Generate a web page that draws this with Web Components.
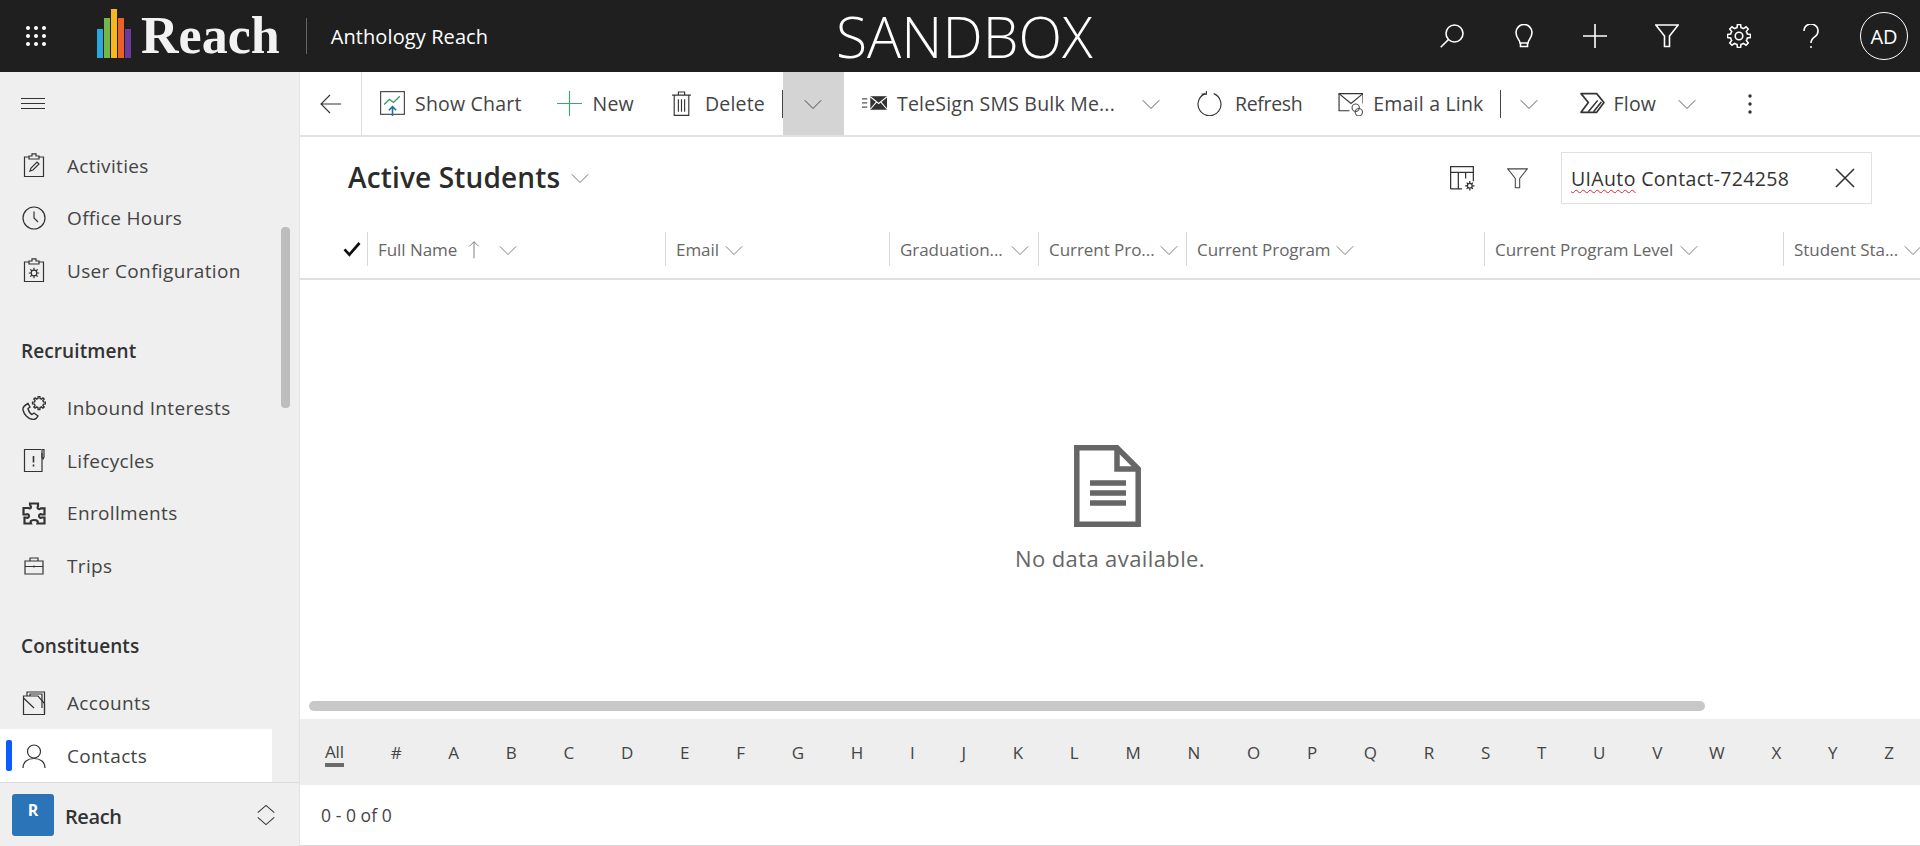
<!doctype html>
<html>
<head>
<meta charset="utf-8">
<style>
	html, body {
		margin: 0;
		padding: 0;
		height: 100%;
		overflow: hidden;
		font-family: "Open Sans", "Noto Sans", sans-serif;
		color: #333;
	}
	app-shell { height: 846px; }
</style>
</head>
<body>

<app-shell>
	<top-bar slot="top"></top-bar>
	<side-nav slot="side">
		<nav-item icon="activities">Activities</nav-item>
		<nav-item icon="clock">Office Hours</nav-item>
		<nav-item icon="userconfig">User Configuration</nav-item>
		<nav-group>Recruitment</nav-group>
		<nav-item icon="inbound">Inbound Interests</nav-item>
		<nav-item icon="lifecycle">Lifecycles</nav-item>
		<nav-item icon="puzzle">Enrollments</nav-item>
		<nav-item icon="trips">Trips</nav-item>
		<nav-group>Constituents</nav-group>
		<nav-item icon="accounts">Accounts</nav-item>
		<nav-item icon="person" active>Contacts</nav-item>
	</side-nav>
	<command-bar slot="main"></command-bar>
	<view-header slot="main"></view-header>
	<grid-header slot="main"></grid-header>
	<empty-state slot="main">No data available.</empty-state>
	<h-scroll slot="main"></h-scroll>
	<jump-bar slot="main"></jump-bar>
	<page-footer slot="main">0 - 0 of 0</page-footer>
</app-shell>

<script>
// toothed outline, used by the settings and inbound icons
function gearPath(cx, cy, outer, inner, teeth) {
	let d = ''
	const step = Math.PI * 2 / teeth
	for(let i = 0; i < teeth; i++) {
		const a = i * step
		const pts = [
			[inner, a - step * .5], [inner, a - step * .3],
			[outer, a - step * .17], [outer, a + step * .17],
			[inner, a + step * .3]
		]
		pts.forEach(([r, t], n) => {
			d += (i === 0 && n === 0 ? 'M' : 'L') + (cx + r * Math.cos(t)).toFixed(2) + ' ' + (cy + r * Math.sin(t)).toFixed(2)
		})
	}
	return d + 'z'
}

const ICONS = {
	waffle: '<g fill="currentColor" stroke="none"><circle cx="4" cy="4" r="2"/><circle cx="12" cy="4" r="2"/><circle cx="20" cy="4" r="2"/><circle cx="4" cy="12" r="2"/><circle cx="12" cy="12" r="2"/><circle cx="20" cy="12" r="2"/><circle cx="4" cy="20" r="2"/><circle cx="12" cy="20" r="2"/><circle cx="20" cy="20" r="2"/></g>',
	search: '<circle cx="14.5" cy="9.5" r="8.5"/><path d="M8.5 15.5L.7 23.3"/>',
	bulb: '<path d="M8 19c0-3-4-5-4-10.5a8 8 0 0 1 16 0C20 14 16 16 16 19z"/><path d="M8.5 19v3.500h7V19"/>',
	plus: '<path d="M0 12h24M12 0v24"/>',
	filter: '<path d="M.8 1h22.4l-8.7 11v10.500h-5V12z"/>',
	gear: `<circle cx="12" cy="12" r="3.8"/><path d="${gearPath(12, 12, 11.6, 8.6, 8)}"/>`,
	help: '<path d="M5 7a7 7 0 1 1 11 5.700c-2.500 1.800-4 2.900-4 6.300"/><circle cx="12" cy="23" r="1" fill="currentColor" stroke="none"/>',
	back: '<path d="M22 12H2M11 3l-9 9 9 9"/>',
	chart: '<rect x=".6" y=".6" width="22.8" height="21.8" fill="none" stroke="#444"/><path d="M4 13l5-5 4 3 6-6" stroke="#2c9f62" stroke-width="1.3"/><path d="M12 24.500V15M8.500 18.500L12 15l3.500 3.500" stroke="#1e6fa8" stroke-width="1.5"/>',
	new: '<path d="M0 12h24M12 0v24" stroke="#3aa76d"/>',
	trash: '<path d="M0 4h18M6 4V1h6v3M2 4v19.400h14V4M6 8v12M9 8v12M12 8v12" transform="translate(3 0)"/>',
	sms: '<rect x="8" y="5" width="16" height="13" fill="#333" stroke="none"/><path d="M8 5.500l8 6.500 8-6.500M8 17.500l6-7M24 17.500l-6-7" stroke="#fff" stroke-width="1"/><path d="M0 7.500h5M0 11.500h5M0 15.500h5" stroke="#555" stroke-width="1.2"/>',
	refresh: '<path d="M16 2.500a11 11 0 1 1-8 0"/><path d="M9 0v3H4.500"/>',
	mail: '<path d="M11 19H1V2.500h23V12"/><path d="M1 2.500l11.500 9.500L24 2.500"/><circle cx="17" cy="16" r="3.500" stroke="#555" stroke-width="1.1"/><circle cx="20" cy="20.300" r="3.500" stroke="#555" stroke-width="1.1"/>',
	flow: '<path d="M1 2.500h15l7 8.500-7 9.500H1l7-9.500z" stroke-width="1.6" stroke-linejoin="round"/><path d="M8 20L17 9M13 20l7.500-9.500" stroke-width="1.5"/>',
	more: '<g fill="currentColor" stroke="none"><circle cx="12" cy="4" r="1.7"/><circle cx="12" cy="12" r="1.7"/><circle cx="12" cy="20" r="1.7"/></g>',
	chev: '<path d="M1 7l11 11L23 7"/>',
	updown: '<path d="M3 9.500l9-8 9 8M3 14.500l9 8 9-8"/>',
	columns: '<path d="M.6 22V.6h21.8v14M.6 6h21.8M8 6v16M15 6v6M.6 22h11"/><circle cx="19" cy="19" r="2.3"/><path d="M19 14.500v2M19 21.500v2M14.500 19h2M21.500 19h2M16 16l1.300 1.300M20.700 20.700L22 22M16 22l1.300-1.300M20.700 17.300L22 16"/>',
	close: '<path d="M3 3l18 18M21 3L3 21" stroke-width="1.6"/>',
	check: '<path d="M2 12.500l6.500 7L22 4" stroke-width="3.6" stroke="#111"/>',
	up: '<path d="M12 23V1M6 7l6-6 6 6"/>',
	activities: '<path d="M7 4H2.500v19.500h19V4H17"/><path d="M7 6V3h3V.8h4V3h3v3z"/><path d="M8 18l1-3 6-6 2 2-6 6z"/>',
	clock: '<circle cx="12" cy="12" r="11"/><path d="M12 5.500V12l4 4"/>',
	userconfig: '<path d="M7 4H2.500v19.500h19V4H17"/><path d="M7 6V3h3V.8h4V3h3v3z"/><circle cx="12" cy="15" r="2.8"/><path d="M12 9.800v2.400M12 17.800v2.400M6.800 15h2.400M14.800 15h2.400M8.300 11.300L10 13M14 17l1.700 1.700M8.300 18.700L10 17M14 13l1.700-1.700"/>',
	inbound: `<path d="M6 7.500C3 9 .5 11.500 1 14c1 4.500 5 9 10 9.500 2 .2 4-1.500 5-3.500l-4-3-2 1.500C8 17.500 6.500 15 6 12.500L8 11z" stroke-width="1.4"/><path d="${gearPath(17, 7, 6.5, 4.6, 8)}" stroke-width="1.4"/>`,
	lifecycle: '<path d="M20 5V23.500H2.500V1.500H19"/><path d="M11.500 8v6.500M11.500 16.500v2" stroke-width="1.6"/><path d="M20 1.500h2V9l-1 2-1-2z" stroke-width="1.2"/>',
	puzzle: '<path d="M8 2.500h8v2.500c0 1-1 1.500 0 2.500 1 .8 2 .8 3-.2h3.500v6.200H20c-1-.8-3-.5-3 1.500s2 2.300 3 1.500h2.500v6h-7c.7-2 .2-3.500-3.500-3.500S8.200 20.500 9 22.500H2.500v-6H4c1 .8 3 .5 3-1.500s-2-2.300-3-1.500H1.500V7h5c1 .8 2.500.5 2.500-1 0-1-1-1.500-1-2.500z" stroke-width="2.2"/>',
	trips: '<path d="M3 8h18v13H3zM8 8V5h8v3M3 13.500h18M12 12.500v2"/>',
	accounts: '<path d="M1.500 7v16.500h21V12.500L16 5H1.500zM1.500 7L12 17"/><path d="M5 5V1h17.500v21M8 5V3h12v14"/>',
	person: '<circle cx="12" cy="7.500" r="6.500"/><path d="M1 24c0-6 4.500-9.500 11-9.500S23 18 23 24"/>'
}

function icon(name, size, sw) {
	return `<svg width="${size}" height="${size}" viewBox="0 0 24 24" fill="none" stroke="currentColor" stroke-width="${sw}">${ICONS[name]}</svg>`
}

function shadow(el, html) {
	const root = el.attachShadow({mode: 'open'})
	root.innerHTML = html
	return root
}

window.customElements.define('app-shell', class extends HTMLElement {
	constructor() {
		super()
		shadow(this, `<style>
			:host { display: grid; grid-template-columns: 300px 1fr; grid-template-rows: 72px 1fr; width: 1920px; }
			.top { grid-column: 1 / 3; display: block; }
			.side { display: block; min-height: 0; }
			.main { display: flex; flex-direction: column; min-width: 0; min-height: 0; background: #fff; }
		</style>
		<div class="top"><slot name="top"></slot></div>
		<div class="side"><slot name="side"></slot></div>
		<div class="main"><slot name="main"></slot></div>`)
	}
})

window.customElements.define('top-bar', class extends HTMLElement {
	constructor() {
		super()
		const btn = (name, w) => `<span class="btn" style="width:${w}px">${icon(name, 24, 1.6)}</span>`
		shadow(this, `<style>
			:host { display: flex; align-items: center; height: 72px; background: #1f1f1f; color: #fff; position: relative; }
			svg { display: block; }
			.waffle { margin-left: 24px; }
			.bars { display: flex; align-items: flex-end; gap: 1px; height: 49px; margin: 0 0 14px 49px; align-self: flex-end; }
			.bars i { display: block; width: 6px; }
			.word { font: bold 52px/72px "Liberation Serif", serif; color: #f2f2f2; margin-left: 10px; height: 72px; }
			.sep { width: 1px; height: 36px; background: #666; margin: 0 24px 0 26px; }
			.app { font-size: 20px; letter-spacing: .1px; color: #fff; }
			.env { position: absolute; left: 836px; top: 0; line-height: 72px; font-size: 57px; font-weight: 300; color: #fff; }
			.right { margin-left: auto; display: flex; align-items: center; padding-right: 12px; }
			.btn { display: flex; justify-content: center; }
			.avatar { width: 46px; height: 46px; border: 1.5px solid #fff; border-radius: 50%; display: flex; align-items: center; justify-content: center; font-size: 20px; margin-left: 13px; }
		</style>
		<span class="waffle">${icon('waffle', 24, 0)}</span>
		<span class="bars">
			<i style="height:29px;background:#2aa7dd"></i>
			<i style="height:40px;background:#73b744"></i>
			<i style="height:49px;background:#f7b71d"></i>
			<i style="height:40px;background:#e8622a"></i>
			<i style="height:29px;background:#6c3a9c"></i>
		</span>
		<span class="word">Reach</span>
		<span class="sep"></span>
		<span class="app">Anthology Reach</span>
		<span class="env">SANDBOX</span>
		<span class="right">
			${btn('search', 72)}${btn('bulb', 71)}${btn('plus', 72)}${btn('filter', 71)}${btn('gear', 73)}${btn('help', 72)}
			<span class="avatar">AD</span>
		</span>`)
	}
})

window.customElements.define('side-nav', class extends HTMLElement {
	constructor() {
		super()
		shadow(this, `<style>
			:host { display: flex; flex-direction: column; height: 774px; background: #efefef; border-right: 1px solid #e2e2e2; box-sizing: border-box; position: relative; }
			.burger { height: 64px; flex: none; display: flex; align-items: center; padding: 0 0 2px 21px; box-sizing: border-box; }
			.burger i { display: block; width: 24px; height: 9px; border-top: 1px solid #333; border-bottom: 1px solid #333; position: relative; }
			.burger i::after { content: ""; position: absolute; left: 0; right: 0; top: 4px; border-top: 1px solid #333; }
			.list { flex: 1; min-height: 0; padding-top: 3px; padding-right: 27px; overflow: hidden; }
			.thumb { position: absolute; left: 281px; top: 155px; width: 9px; height: 181px; background: #bdbdbd; border-radius: 4px; }
			.app { flex: none; height: 64px; border-top: 1px solid #dcdcdc; box-sizing: border-box; display: flex; align-items: center; padding: 0 22px 0 12px; }
			.tile { width: 42px; height: 42px; border-radius: 3px; background: #2b74b8; color: #fff; font-weight: 700; font-size: 16px; display: flex; justify-content: center; padding-top: 5px; box-sizing: border-box; margin-right: 11px; }
			.name { font-size: 20px; font-weight: 600; letter-spacing: -.4px; color: #333; flex: 1; padding-top: 3px; }
			svg { display: block; color: #333; }
		</style>
		<div class="burger"><i></i></div>
		<div class="list"><slot></slot></div>
		<div class="thumb"></div>
		<div class="app"><span class="tile">R</span><span class="name">Reach</span>${icon('updown', 22, 1.1)}</div>`)
	}
})

window.customElements.define('nav-item', class extends HTMLElement {
	constructor() {
		super()
		const active = this.hasAttribute('active')
		shadow(this, `<style>
			:host { display: flex; align-items: center; height: 52.5px; padding-left: 22px; font-size: 19px; letter-spacing: .35px; color: #444; position: relative; }
			:host([active]) { background: #fff; height: 53px; }
			svg { display: block; color: #333; flex: none; margin-right: 21px; }
			.label { padding-top: 1px; }
			.bar { position: absolute; left: 6px; top: 11px; width: 6px; height: 31px; border-radius: 2px; background: #0b5cff; }
		</style>
		${active ? '<span class="bar"></span>' : ''}
		${icon(this.getAttribute('icon'), 24, 1.2)}<span class="label"><slot></slot></span>`)
	}
})

window.customElements.define('nav-group', class extends HTMLElement {
	constructor() {
		super()
		shadow(this, `<style>
			:host { display: flex; align-items: flex-start; height: 85px; box-sizing: border-box; padding: 40px 0 0 21px; font-size: 19px; line-height: 28px; font-weight: 600; letter-spacing: .1px; color: #333; }
		</style><slot></slot>`)
	}
})

window.customElements.define('cmd-button', class extends HTMLElement {
	constructor() {
		super()
		const ic = this.getAttribute('icon')
		const gap = this.getAttribute('gap') || 10
		shadow(this, `<style>
			:host { display: flex; align-items: center; height: 63px; font-size: 19.5px; letter-spacing: .2px; color: #444; white-space: nowrap; flex: none; }
			svg { display: block; margin-right: ${gap}px; flex: none; color: #333; }
		</style>
		${ic ? icon(ic, 25, 1.1) : ''}<slot></slot>`)
	}
})

window.customElements.define('command-bar', class extends HTMLElement {
	constructor() {
		super()
		const chev = (ml) => `<span class="chev" style="margin-left:${ml}px">${icon('chev', 18, 1.3)}</span>`
		shadow(this, `<style>
			:host { display: flex; align-items: center; height: 65px; flex: none; border-bottom: 2px solid #e2e2e2; box-sizing: border-box; overflow: hidden; }
			svg { display: block; }
			.back { width: 62px; height: 63px; display: flex; align-items: center; justify-content: center; border-right: 1px solid #dedede; box-sizing: border-box; color: #333; flex: none; margin-right: 18px; }
			.chev { color: #555; flex: none; }
			.split { width: 1px; height: 28px; background: #444; flex: none; }
			.hot { width: 61px; height: 63px; background: #d4d4d4; display: flex; align-items: center; justify-content: center; color: #444; flex: none; }
			.more { margin-left: 42px; color: #333; }
		</style>
		<span class="back">${icon('back', 24, 1.1)}</span>
		<cmd-button icon="chart">Show Chart</cmd-button>
		<cmd-button icon="new" style="margin-left:35px" gap="11">New</cmd-button>
		<cmd-button icon="trash" style="margin-left:35px" gap="11">Delete</cmd-button>
		<span class="split" style="margin-left:17px"></span>
		<span class="hot">${icon('chev', 18, 1.3)}</span>
		<cmd-button icon="sms" style="margin-left:18px">TeleSign SMS Bulk Me...</cmd-button>
		${chev(27)}
		<cmd-button icon="refresh" style="margin-left:37px;letter-spacing:-.35px" gap="13">Refresh</cmd-button>
		<cmd-button icon="mail" style="margin-left:36px">Email a Link</cmd-button>
		<span class="split" style="margin-left:16px"></span>
		${chev(19)}
		<cmd-button icon="flow" style="margin-left:42px" gap="9">Flow</cmd-button>
		${chev(22)}
		<span class="more">${icon('more', 24, 0)}</span>`)
	}
})

window.customElements.define('view-header', class extends HTMLElement {
	constructor() {
		super()
		shadow(this, `<style>
			:host { display: flex; align-items: center; height: 82px; flex: none; box-sizing: border-box; padding: 0 48px 0 48px; color: #333; }
			svg { display: block; }
			.title { font-size: 28px; font-weight: 600; letter-spacing: .15px; color: #2b2b2b; margin-top: -2px; }
			.tchev { margin-left: 11px; color: #555; }
			.spring { flex: 1; }
			.search { width: 311px; height: 52px; border: 1px solid #e0e0e0; box-sizing: border-box; display: flex; align-items: center; padding: 0 14px 0 9px; margin-left: 33px; font-size: 19.5px; letter-spacing: .35px; color: #333; }
			.search .text { flex: 1; white-space: nowrap; }
			.wavy { text-decoration: underline wavy #d8262c 1px; text-underline-offset: 3px; text-decoration-skip-ink: none; }
		</style>
		<span class="title">Active Students</span>
		<span class="tchev">${icon('chev', 18, 1.1)}</span>
		<span class="spring"></span>
		<span>${icon('columns', 25, 1.2)}</span>
		<span style="margin-left:32px;color:#444">${icon('filter', 21, 1.2)}</span>
		<span class="search"><span class="text"><span class="wavy">UIAuto</span> Contact-724258</span>${icon('close', 24, 1.2)}</span>`)
	}
})

window.customElements.define('grid-column', class extends HTMLElement {
	constructor() {
		super()
		const sorted = this.hasAttribute('sorted')
		shadow(this, `<style>
			:host { display: flex; align-items: center; flex: none; height: 34px; box-sizing: border-box; border-left: 1px solid #d8d8d8; padding: 2px 0 0 10px; font-size: 17px; letter-spacing: -.05px; color: #666; white-space: nowrap; overflow: hidden; }
			svg { display: block; flex: none; color: #666; }
			.c { margin-left: ${this.getAttribute('gap') || 6}px; }
			.u { margin-left: 8px; }
		</style>
		<slot></slot>${sorted ? `<span class="u">${icon('up', 18, 1.1)}</span>` : ''}<span class="c">${icon('chev', 18, 1.1)}</span>`)
	}
})

window.customElements.define('grid-header', class extends HTMLElement {
	constructor() {
		super()
		shadow(this, `<style>
			:host { display: flex; align-items: center; height: 61px; flex: none; box-sizing: border-box; border-bottom: 2px solid #e0e0e0; overflow: hidden; padding-left: 43px; }
			svg { display: block; }
			.check { width: 24px; flex: none; }
		</style>
		<span class="check">${icon('check', 18, 1)}</span>
		<grid-column sorted style="width:298px" gap="16">Full Name</grid-column>
		<grid-column style="width:224px">Email</grid-column>
		<grid-column style="width:149px" gap="8">Graduation...</grid-column>
		<grid-column style="width:148px" gap="5">Current Pro...</grid-column>
		<grid-column style="width:298px" gap="5">Current Program</grid-column>
		<grid-column style="width:299px" gap="7">Current Program Level</grid-column>
		<grid-column style="width:200px" gap="6">Student Sta...</grid-column>`)
	}
})

window.customElements.define('empty-state', class extends HTMLElement {
	constructor() {
		super()
		shadow(this, `<style>
			:host { display: flex; flex-direction: column; align-items: center; flex: 1; min-height: 0; padding-top: 165px; box-sizing: border-box; font-size: 22px; letter-spacing: .4px; color: #666; }
			svg { display: block; margin-left: -6px; }
			.t { margin-top: 16px; line-height: 30px; }
		</style>
		<svg width="67" height="82" viewBox="0 0 67 82" fill="none" stroke="#666" stroke-width="5.5">
			<path d="M2.8 2.8H43L64.2 24V79.2H2.8z"/>
			<path d="M43 2.8V24H64.2"/>
			<path d="M16 38h36M16 48h36M16 58h36"/>
		</svg>
		<div class="t"><slot></slot></div>`)
	}
})

window.customElements.define('h-scroll', class extends HTMLElement {
	constructor() {
		super()
		shadow(this, `<style>
			:host { display: block; height: 18px; flex: none; padding: 0 0 0 9px; }
			i { display: block; width: 1396px; height: 10px; border-radius: 5px; background: #c8c8c8; }
		</style><i></i>`)
	}
})

window.customElements.define('jump-bar', class extends HTMLElement {
	constructor() {
		super()
		const letters = '#ABCDEFGHIJKLMNOPQRSTUVWXYZ'.split('').map(c => `<span>${c}</span>`).join('')
		shadow(this, `<style>
			:host { display: flex; align-items: center; justify-content: space-between; height: 66px; flex: none; box-sizing: border-box; background: #eeeeee; padding: 0 26px 0 25px; font-size: 17px; color: #444; letter-spacing: -.2px; }
			.all { display: block; border-bottom: 4px solid #6a6a6a; line-height: 22px; margin-top: 4px; }
		</style>
		<span class="all">All</span>${letters}`)
	}
})

window.customElements.define('page-footer', class extends HTMLElement {
	constructor() {
		super()
		shadow(this, `<style>
			:host { display: flex; align-items: center; height: 61px; flex: none; box-sizing: border-box; border-bottom: 1px solid #d8d8d8; padding-left: 21px; font-size: 17.5px; letter-spacing: .05px; color: #444; }
		</style><slot></slot>`)
	}
})
</script>
</body>
</html>
